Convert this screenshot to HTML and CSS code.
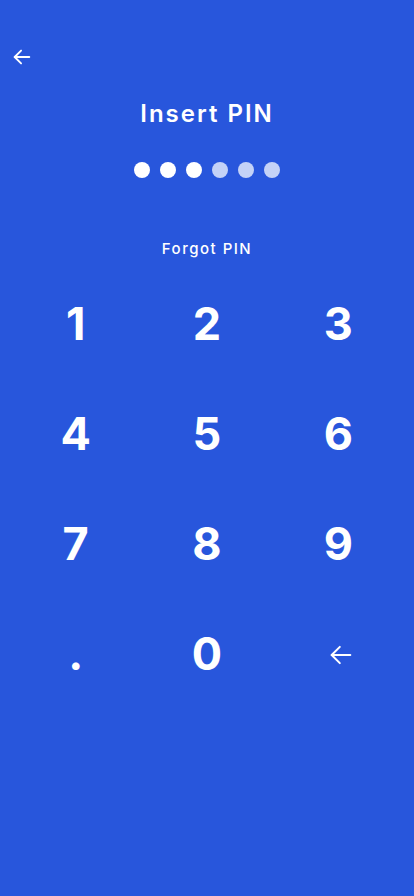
FILE: index.html
```html
<!DOCTYPE html>
<html lang="en">
<head>
    <meta charset="UTF-8">
    <meta name="viewport" content="width=device-width, initial-scale=1.0">
    <title>Insert PIN</title>
    <link rel="stylesheet" href="styles.css">
</head>
<body>
    <div class="screen">
        <!-- Barra superior -->
        <div class="top-bar">
            <button class="icon-btn back-btn" aria-label="Back">
                <svg width="22" height="22" viewBox="0 0 24 24" fill="none" stroke="#ffffff" stroke-width="2" stroke-linecap="round" stroke-linejoin="round">
                    <path d="M20 12H4"/>
                    <path d="M11 5l-7 7 7 7"/>
                </svg>
            </button>
        </div>

        <h1 class="title">Insert PIN</h1>

        <!-- Indicador de PIN -->
        <div class="pin-dots">
            <span class="dot filled"></span>
            <span class="dot filled"></span>
            <span class="dot filled"></span>
            <span class="dot"></span>
            <span class="dot"></span>
            <span class="dot"></span>
        </div>

        <a href="#" class="forgot">Forgot PIN</a>

        <!-- Teclado numerico -->
        <div class="keypad">
            <button class="key">1</button>
            <button class="key">2</button>
            <button class="key">3</button>
            <button class="key">4</button>
            <button class="key">5</button>
            <button class="key">6</button>
            <button class="key">7</button>
            <button class="key">8</button>
            <button class="key">9</button>
            <button class="key key-dot">.</button>
            <button class="key">0</button>
            <button class="key key-del" aria-label="Delete">
                <svg width="28" height="28" viewBox="0 0 24 24" fill="none" stroke="#ffffff" stroke-width="1.7" stroke-linecap="round" stroke-linejoin="round">
                    <path d="M20 12H4"/>
                    <path d="M11 5l-7 7 7 7"/>
                </svg>
            </button>
        </div>
    </div>
</body>
</html>
```

FILE: styles.css
```css
/* Estilo general */
body {
    margin: 0;
    padding: 0;
    background-color: #2856dc;
    font-family: 'Inter', 'Noto Sans', sans-serif;
    color: #ffffff;
}

.screen {
    height: 896px;
    display: flex;
    flex-direction: column;
    align-items: center;
}

.top-bar {
    align-self: stretch;
    height: 68px;
    padding: 46px 0 0 11px;
    box-sizing: border-box;
    display: flex;
    align-items: flex-start;
}

.icon-btn {
    background: none;
    border: none;
    padding: 0;
    cursor: pointer;
    display: flex;
}

.title {
    margin: 30px 0 0 0;
    font-size: 24px;
    font-weight: 600;
    letter-spacing: 2px;
    line-height: 32px;
}

/* Puntos del PIN */
.pin-dots {
    display: flex;
    gap: 10px;
    margin-top: 32px;
}

.dot {
    width: 16px;
    height: 16px;
    border-radius: 50%;
    background-color: #c4d2f7;
}

.dot.filled {
    background-color: #ffffff;
}

.forgot {
    margin-top: 61px;
    color: #ffffff;
    text-decoration: none;
    font-size: 15px;
    font-weight: 500;
    letter-spacing: 1.5px;
    line-height: 20px;
}

/* Teclado */
.keypad {
    align-self: stretch;
    display: grid;
    grid-template-columns: repeat(3, 1fr);
    grid-auto-rows: 110px;
    padding: 0 10px;
    margin-top: 9px;
}

.key {
    background: none;
    border: none;
    color: #ffffff;
    font-family: 'Inter', 'Noto Sans', sans-serif;
    font-size: 45px;
    font-weight: 700;
    cursor: pointer;
    display: flex;
    align-items: center;
    justify-content: center;
}

.key-del {
    padding-left: 12px;
    padding-top: 4px;
}
```
